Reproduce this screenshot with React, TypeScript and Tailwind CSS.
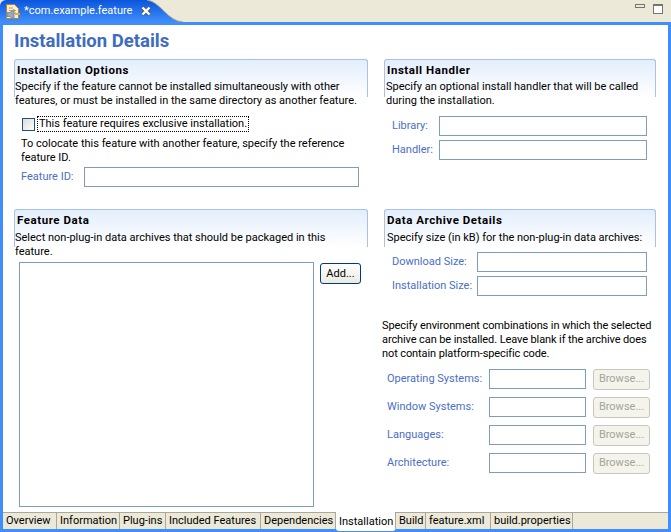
const tabs = [
  { name: 'Overview', width: 'w-[54px] pl-[3px]' },
  { name: 'Information', width: 'w-[63px] pl-[3px]' },
  { name: 'Plug-ins', width: 'w-[46px] pl-[3px]' },
  { name: 'Included Features', width: 'w-[95px] pl-[3px]' },
  { name: 'Dependencies', width: 'w-[75px] pl-[3px]' },
  { name: 'Installation', width: 'w-[60px] pl-[3px]' },
  { name: 'Build', width: 'w-[30px] pl-[3px]' },
  { name: 'feature.xml', width: 'w-[65px] pl-[3px]' },
  { name: 'build.properties', width: 'w-[82px] pl-[3px]' },
]

const Section = ({ title, children }: { title: string; children: React.ReactNode }) => (
  <div className="flex flex-col">
    <div className="-mb-[17px] h-[38px] rounded-t-[3px] border-x border-t border-b-0 border-[#a9c1e8] bg-gradient-to-b from-[#e3eefc] to-white px-[2px] pt-[3px] text-[11.5px] font-bold tracking-[0.55px] text-black">
      {title}
    </div>
    {children}
  </div>
)

const Field = ({ label, labelWidth, className = '' }: { label: string; labelWidth: string; className?: string }) => (
  <div className={`flex items-center ${className}`}>
    <span className={`shrink-0 whitespace-nowrap text-[#4a6fc4] ${labelWidth}`}>{label}</span>
    <div className="h-[20px] flex-1 border border-[#7f9db9] bg-white" />
  </div>
)

const EnvRow = ({ label }: { label: string }) => (
  <div className="flex h-[20px] items-center">
    <span className="w-[105px] whitespace-nowrap pl-[3px] text-[#4a6fc4]">{label}</span>
    <div className="h-[20px] w-[97px] border border-[#7f9db9] bg-white" />
    <div className="ml-[7px] flex h-[21px] w-[57px] items-center justify-center rounded-[3px] border border-[#c9c7ba] bg-[#f4f4ec] text-[#a5a497]">
      Browse...
    </div>
  </div>
)

export default function App() {
  return (
    <div
      className="flex h-[532px] w-[671px] flex-col overflow-hidden bg-[#ece9d8] text-[11px] leading-[14px] text-black"
      style={{ fontFamily: 'Roboto, sans-serif' }}
    >
      {/* editor tab */}
      <div className="relative flex h-[22px] shrink-0 items-center justify-between rounded-tr-[6px]">
        <div className="flex h-[22px] w-[183px] items-center">
          <div className="flex h-[22px] w-[147px] items-center rounded-tl-[6px] bg-gradient-to-b from-[#0a54dc] to-[#3f8efb] pl-[4px] text-white">
            <svg width="17" height="17" viewBox="0 0 17 17" className="mr-[3px] shrink-0">
              <path d="M2.5 1.5h8l4 4v10h-12z" fill="#fbeecb" stroke="#b9803a" />
              <path d="M5 5h4M5 7.5h7M9 10h3" stroke="#d59a4c" />
              <path d="M3 9.5h3l4-3v10l-4-3H3z" fill="#98a9bd" stroke="#6f8199" strokeWidth="0.8" />
              <path d="M11 11h5" stroke="#e3a84a" strokeWidth="2" />
            </svg>
            <span className="whitespace-nowrap">*com.example.feature</span>
            <svg width="12" height="12" viewBox="0 0 12 12" className="relative z-10 ml-[8px] shrink-0">
              <path d="M2.5 2.5l7 7M9.5 2.5l-7 7" stroke="#4f5a6b" strokeWidth="4" />
              <path d="M2.5 2.5l7 7M9.5 2.5l-7 7" stroke="#ffffff" strokeWidth="2.4" />
            </svg>
          </div>
          <svg width="36" height="22" viewBox="0 0 36 22">
            <defs>
              <linearGradient id="tabCurve" x1="0" y1="0" x2="0" y2="1">
                <stop offset="0" stopColor="#0a54dc" />
                <stop offset="1" stopColor="#3f8efb" />
              </linearGradient>
            </defs>
            <path d="M0 0C14 2 20 21 36 22L0 22Z" fill="url(#tabCurve)" />
            <path d="M0 0C14 2 20 21 36 22" fill="none" stroke="#a9a68f" />
          </svg>
        </div>
        <div className="mr-[8px] flex items-center gap-[8px] self-start pt-[4px]">
          <div className="h-[4px] w-[10px] self-start border border-[#76756a]" />
          <div className="h-[10px] w-[10px] border border-t-[2px] border-[#76756a] bg-white" />
        </div>
      </div>

      {/* editor body */}
      <div className="flex min-h-0 flex-1 flex-col border-[3px] border-[#3f8efb]">
        <div className="min-h-0 flex-1 bg-white pl-[11px] pr-[12px]">
          <h1 className="mt-[3px] h-[28px] text-[18.5px] leading-[26px] font-bold text-[#3e6cc0]">Installation Details</h1>

          <div className="mt-[3px] grid grid-cols-[354px_272px] gap-x-[16px]">
            <div className="h-[150px]">
              <Section title="Installation Options">
                <p className="pl-[1px]">
                  Specify if the feature cannot be installed simultaneously with other features, or must be installed in the same directory as another feature.
                </p>
                <div className="mt-[8px] flex items-center pl-[8px]">
                  <div className="h-[13px] w-[13px] border border-[#1c5180] bg-gradient-to-br from-[#dcdcd7] to-white" />
                  <span className="ml-[2px] border border-dotted border-black px-[1px]">This feature requires exclusive installation.</span>
                </div>
                <p className="mt-[5px] pl-[7px]">To colocate this feature with another feature, specify the reference feature ID.</p>
                <Field label="Feature ID:" labelWidth="w-[70px] pl-[7px]" className="mt-[2px] mr-[9px]" />
              </Section>
            </div>
            <div>
              <Section title="Install Handler">
                <p className="pl-[2px]">Specify an optional install handler that will be called during the installation.</p>
                <Field label="Library:" labelWidth="w-[55px] pl-[8px]" className="mt-[8px] mr-[9px]" />
                <Field label="Handler:" labelWidth="w-[55px] pl-[8px]" className="mt-[4px] mr-[9px]" />
              </Section>
            </div>

            <div>
              <Section title="Feature Data">
                <p className="mt-[1px] pl-[1px]">
                  Select non-plug-in data archives that should be packaged in this
                  <br />
                  feature.
                </p>
                <div className="mt-[3px] flex items-start pl-[5px]">
                  <div className="h-[245px] w-[295px] border border-[#7f9db9] bg-white" />
                  <div className="ml-[6px] mt-[1px] flex h-[21px] w-[41px] items-center justify-center rounded-[3px] border border-[#003c74] bg-gradient-to-b from-white to-[#ecebe0]">
                    Add...
                  </div>
                </div>
              </Section>
            </div>
            <div>
              <Section title="Data Archive Details">
                <p className="mt-[1px] pl-[3px]">Specify size (in kB) for the non-plug-in data archives:</p>
                <Field label="Download Size:" labelWidth="w-[93px] pl-[8px]" className="mt-[7px] mr-[9px]" />
                <Field label="Installation Size:" labelWidth="w-[93px] pl-[8px]" className="mt-[4px] mr-[9px]" />
                <p className="-ml-[2px] -mr-[8px] mt-[23px] tracking-[-0.1px]">
                  Specify environment combinations in which the selected archive can be installed. Leave blank if the archive does not contain platform-specific code.
                </p>
                <div className="mt-[8px] flex flex-col gap-[8px]">
                  <EnvRow label="Operating Systems:" />
                  <EnvRow label="Window Systems:" />
                  <EnvRow label="Languages:" />
                  <EnvRow label="Architecture:" />
                </div>
              </Section>
            </div>
          </div>
        </div>

        {/* page tabs */}
        <div className="flex h-[17px] shrink-0 border-t border-[#aca899] bg-[#ece9d8]">
          {tabs.map((tab) =>
            tab.name === 'Installation' ? (
              <div key={tab.name} className={`-mt-[1px] flex h-[19px] items-center whitespace-nowrap rounded-b-[3px] border-r border-[#aca899] bg-white ${tab.width}`}>
                {tab.name}
              </div>
            ) : (
              <div key={tab.name} className={`flex items-center whitespace-nowrap border-r border-[#aca899] ${tab.width}`}>
                {tab.name}
              </div>
            ),
          )}
        </div>
      </div>
    </div>
  )
}
